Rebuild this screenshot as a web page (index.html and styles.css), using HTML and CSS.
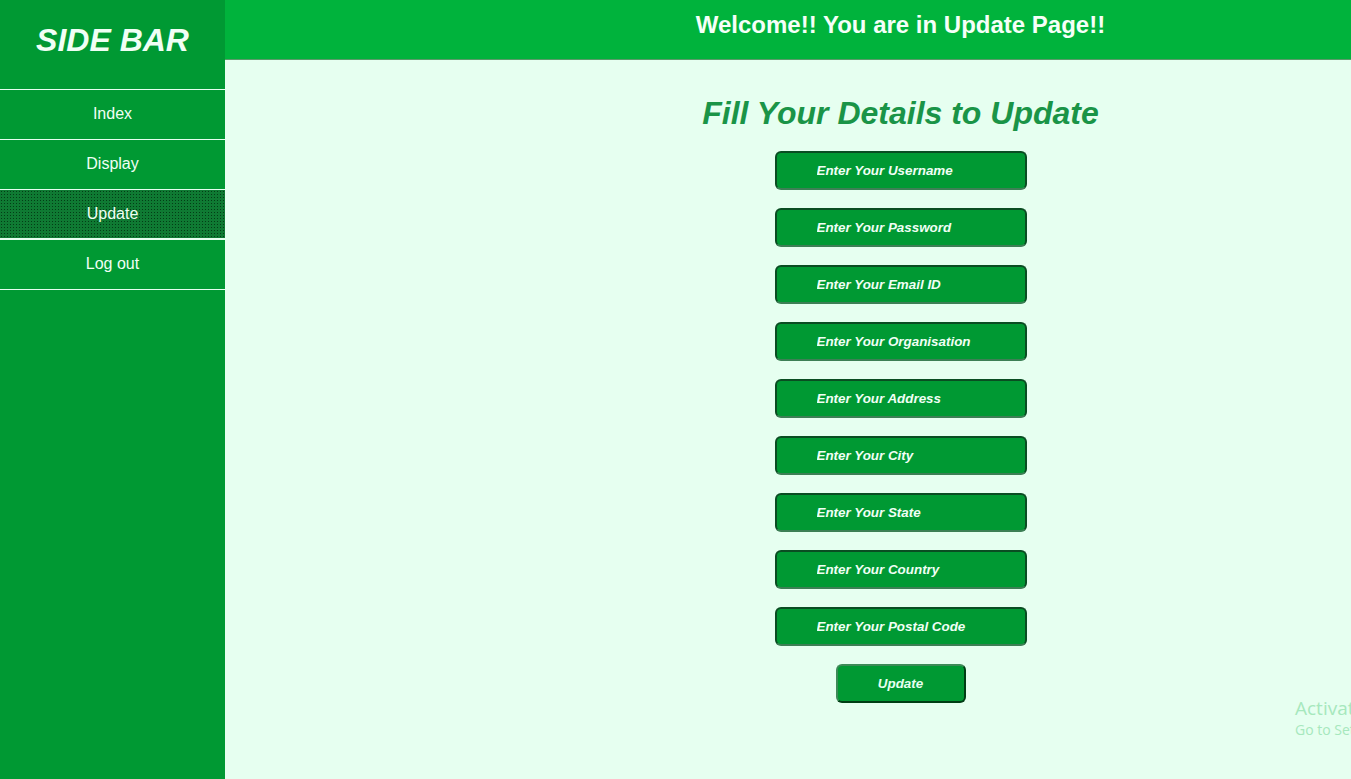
FILE: index.html
```html
<!DOCTYPE html>
<html>
<head>
<meta charset="utf-8">
<link rel="stylesheet" href="styles.css">
</head>
<body>
<aside class="sidebar">
  <h1 class="side-title">SIDE BAR</h1>
  <nav class="side-nav">
    <a class="side-link">Index</a>
    <a class="side-link">Display</a>
    <a class="side-link active">Update</a>
    <a class="side-link">Log out</a>
  </nav>
</aside>
<div class="page">
  <header class="topbar">Welcome!! You are in Update Page!!</header>
  <main class="content">
    <h2 class="form-title">Fill Your Details to Update</h2>
    <form class="form">
      <input class="field" type="text" placeholder="Enter Your Username">
      <input class="field" type="password" placeholder="Enter Your Password">
      <input class="field" type="text" placeholder="Enter Your Email ID">
      <input class="field" type="text" placeholder="Enter Your Organisation">
      <input class="field" type="text" placeholder="Enter Your Address">
      <input class="field" type="text" placeholder="Enter Your City">
      <input class="field" type="text" placeholder="Enter Your State">
      <input class="field" type="text" placeholder="Enter Your Country">
      <input class="field" type="text" placeholder="Enter Your Postal Code">
      <button class="submit" type="button">Update</button>
    </form>
  </main>
</div>
<div class="watermark">
  <div class="wm-1">Activate Windows</div>
  <div class="wm-2">Go to Settings to activate Windows.</div>
</div>
</body>
</html>
```
FILE: styles.css
```css
html, body {
  margin: 0;
  padding: 0;
  height: 100%;
  overflow: hidden;
}
body {
  font-family: "Liberation Sans", Arial, sans-serif;
  background: #e6fff0;
  display: flex;
}
.sidebar {
  flex: 0 0 225px;
  width: 225px;
  height: 779px;
  background: #009933;
  color: #ffffff;
}
.side-title {
  margin: 0;
  height: 90px;
  box-sizing: border-box;
  padding-top: 22px;
  text-align: center;
  font-size: 32px;
  font-style: italic;
  font-weight: bold;
  color: #f0fff5;
  border-bottom: 1px solid #e6fff0;
}
.side-nav {
  display: flex;
  flex-direction: column;
}
.side-link {
  display: block;
  height: 49px;
  line-height: 48px;
  text-align: center;
  font-size: 16px;
  color: #f0fff5;
  border-bottom: 1px solid #e6fff0;
}
.side-link.active {
  background-color: #0f7a33;
  background-image: radial-gradient(circle, #033d16 0.7px, transparent 0.9px);
  background-size: 3px 3px;
  border-bottom-width: 2px;
  height: 48px;
}
.page {
  flex: 0 0 1351px;
  width: 1351px;
  display: flex;
  flex-direction: column;
}
.topbar {
  height: 60px;
  box-sizing: border-box;
  background: #00b33c;
  color: #f5fff8;
  font-size: 24px;
  font-weight: bold;
  text-align: center;
  padding-top: 11px;
  border-bottom: 1px solid #5a9a6a;
}
.content {
  display: flex;
  flex-direction: column;
  align-items: center;
}
.form-title {
  margin: 34px 0 0 0;
  font-size: 32px;
  font-style: italic;
  font-weight: bold;
  color: #1a9447;
  line-height: 38px;
}
.form {
  display: flex;
  flex-direction: column;
  align-items: center;
  gap: 18px;
  margin-top: 19px;
}
.field {
  width: 252px;
  height: 39px;
  box-sizing: border-box;
  background: #009933;
  border: 2px solid #0a4d22;
  border-bottom-color: #3d7f55;
  border-radius: 6px;
  padding: 0 0 0 40px;
  font-family: "Liberation Sans", Arial, sans-serif;
  font-size: 13.4px;
  font-style: italic;
  font-weight: bold;
  color: #ffffff;
  outline: none;
}
.field::placeholder {
  color: #f0fff5;
  opacity: 1;
}
.submit {
  width: 130px;
  height: 39px;
  box-sizing: border-box;
  background: #009933;
  border: 2px solid #003d14;
  border-top-color: #3d8a57;
  border-left-color: #3d8a57;
  border-radius: 6px;
  font-family: "Liberation Sans", Arial, sans-serif;
  font-size: 13.4px;
  font-style: italic;
  font-weight: bold;
  color: #e6fff0;
}
.watermark {
  position: absolute;
  left: 1295px;
  top: 696px;
  color: #a6e8bd;
  font-family: "Open Sans", "Noto Sans", sans-serif;
  white-space: nowrap;
}
.wm-1 {
  font-size: 19px;
  line-height: 24px;
}
.wm-2 {
  font-size: 14px;
  line-height: 20px;
}
```
